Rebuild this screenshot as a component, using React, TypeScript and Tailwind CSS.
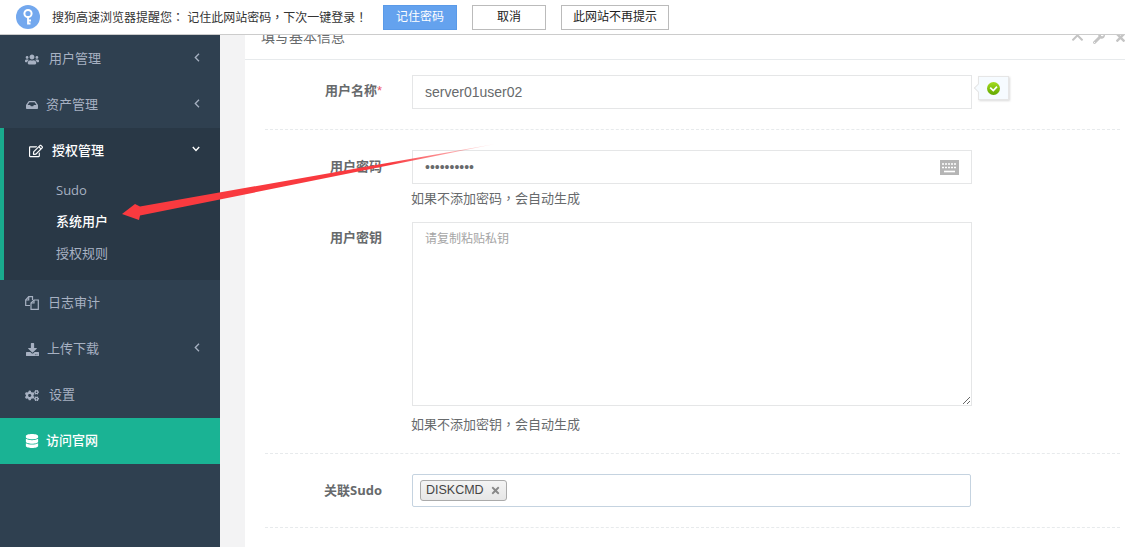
import React from "react";
import { FaUsers, FaInbox, FaRegEdit, FaDownload, FaCogs, FaDatabase, FaChevronUp, FaWrench, FaTimes } from "react-icons/fa";

const CJK = "font-['Open_Sans','Noto_Sans_CJK_SC',sans-serif]";

const P = ({ children }: { children: React.ReactNode }) => (
  <span className="font-['Noto_Sans_CJK_TC',sans-serif]">{children}</span>
);

const ChevLeft = () => (
  <svg width="6" height="9" viewBox="0 0 6 9" className="-translate-y-[2px]">
    <path d="M5 .8 1.3 4.5 5 8.2" fill="none" stroke="currentColor" strokeWidth="1.3" />
  </svg>
);

const ChevDown = () => (
  <svg width="8" height="6" viewBox="0 0 8 6" className="-translate-y-[2px]">
    <path d="M.8 1 4 4.4 7.2 1" fill="none" stroke="currentColor" strokeWidth="1.4" />
  </svg>
);

const FilesIcon = () => (
  <svg width="14" height="14" viewBox="0 0 14 14" fill="none" stroke="currentColor" strokeWidth="1.2">
    <path d="M5 9.5H.7V4L3.7.7H7.5V4" />
    <path d="M3.7.7V4H.7" />
    <path d="M6 13.3V7L9 4h4.3v9.3Z" />
    <path d="M9 4v3H6" />
  </svg>
);

function NavItem({ icon, label, arrow, gap = "gap-[10px]" }: { icon: React.ReactNode; label: string; arrow?: boolean; gap?: string }) {
  return (
    <div className={`h-[46px] pl-[25px] pr-[20px] flex items-center text-[13px] text-[#a7b1c2] ${gap}`}>
      <span className="w-[14px] flex justify-center">{icon}</span>
      <span className="flex-1">{label}</span>
      {arrow && <ChevLeft />}
    </div>
  );
}

function Sidebar() {
  return (
    <aside className="w-[220px] shrink-0 bg-[#2f4050] pt-px flex flex-col font-normal">
      <NavItem icon={<FaUsers size={15} />} label="用户管理" arrow />
      <NavItem icon={<FaInbox size={12} />} label="资产管理" arrow gap="gap-[7px]" />
      <div className="h-[152px] bg-[#293846] border-l-4 border-[#19aa8d]">
        <div className="h-[46px] pl-[25px] pr-[20px] flex items-center gap-[9px] text-[13px] text-white font-medium">
          <FaRegEdit size={14} className="shrink-0" />
          <span className="flex-1">授权管理</span>
          <ChevDown />
        </div>
        <div className="pl-[52px] pt-[1px] text-[13px] text-[#a7b1c2]">
          <div className="h-[31px] flex items-center">Sudo</div>
          <div className="h-[32px] flex items-center text-white font-medium">系统用户</div>
          <div className="h-[32px] flex items-center">授权规则</div>
        </div>
      </div>
      <NavItem icon={<FilesIcon />} label="日志审计" gap="gap-[9px]" />
      <NavItem icon={<FaDownload size={13} />} label="上传下载" arrow gap="gap-[8px]" />
      <NavItem icon={<FaCogs size={15} />} label="设置" />
      <div className="h-[46px] pl-[25px] flex items-center gap-[7px] bg-[#1ab394] text-white text-[13px] font-medium">
        <FaDatabase size={14} />
        <span>访问官网</span>
      </div>
    </aside>
  );
}

function TopBar() {
  return (
    <div className={`h-[35px] shrink-0 bg-white border-b border-[#cccccc] flex items-center text-[12px] text-[#333] ${CJK}`}>
      <svg className="ml-[16px] shrink-0" width="24" height="24" viewBox="0 0 24 24">
        <circle cx="12" cy="12" r="12" fill="#73a8ee" />
        <circle cx="12" cy="8.5" r="3.6" fill="none" stroke="#fff" strokeWidth="2" />
        <path d="M12 12v7.5M12 15.5h3M12 18.5h2.5" stroke="#fff" strokeWidth="1.8" fill="none" />
      </svg>
      <span className="ml-[12px] w-[331px] whitespace-nowrap">
        搜狗高速浏览器提醒您<P>：</P> 记住此网站密码<P>，</P>下次一键登录<P>！</P>
      </span>
      <div className="w-[74px] h-[25px] bg-[#64a2ee] border border-[#5a9ae8] text-white flex items-center justify-center">记住密码</div>
      <div className="ml-[15px] w-[74px] h-[25px] border border-[#bbb] flex items-center justify-center text-[#222]">取消</div>
      <div className="ml-[15px] w-[108px] h-[25px] border border-[#bbb] flex items-center justify-center text-[#222]">此网站不再提示</div>
    </div>
  );
}

function Label({ children, className = "" }: { children: React.ReactNode; className?: string }) {
  return <div className={`w-[137px] shrink-0 text-right text-[13px] font-bold text-[#676a6c] ${className}`}>{children}</div>;
}

const Dash = ({ className = "" }: { className?: string }) => (
  <div className={`ml-[20px] w-[855px] border-t border-dashed border-[#e7eaec] ${className}`} />
);

function ValidTip() {
  return (
    <div className="relative ml-[6px] mt-[1px] w-[31px] h-[24px] bg-[#f6fbff] border border-[#e6e6e6] shadow-[1px_1px_2px_rgba(0,0,0,0.15)] flex items-center justify-center">
      <span className="absolute -left-[4px] top-[8px] w-[6px] h-[6px] rotate-45 bg-[#f6fbff] border-l border-b border-[#e6e6e6]" />
      <svg width="13" height="13" viewBox="0 0 13 13">
        <defs>
          <linearGradient id="ok" x1="0" y1="0" x2="0" y2="1">
            <stop offset="0" stopColor="#a4dc1e" />
            <stop offset="1" stopColor="#62a800" />
          </linearGradient>
        </defs>
        <circle cx="6.5" cy="6.5" r="6.5" fill="url(#ok)" />
        <path d="M3.2 5.6 6.3 8.6 10 4.6" stroke="#fff" strokeWidth="1.7" fill="none" />
      </svg>
    </div>
  );
}

function Keyboard() {
  return (
    <svg width="19" height="15" viewBox="0 0 19 15">
      <rect width="19" height="15" fill="#b5b5b5" />
      <path d="M2 4h15M2 7.5h15" stroke="#fff" strokeWidth="1.6" strokeDasharray="2 1" fill="none" />
      <path d="M4 11.5h11" stroke="#fff" strokeWidth="1.6" fill="none" />
    </svg>
  );
}

function Form() {
  return (
    <main className="flex-1 min-w-0 bg-[#f3f3f4] pl-[25px] overflow-hidden">
      <div className={`h-full bg-white ${CJK}`}>
        <div className="h-[25px] border-b border-[#e7eaec] flex items-start text-[14px] text-[#676a6c]">
          <div className="ml-[16px] h-[11px] overflow-hidden flex items-end flex-1">
            <span className="block leading-[18px] whitespace-nowrap">填写基本信息</span>
          </div>
          <div className="flex text-[#c4c4c4] h-[9px] items-end overflow-hidden -mr-[2px]">
            <FaChevronUp size={13} />
            <FaWrench size={12} className="ml-[9px]" />
            <FaTimes size={13} className="ml-[9px]" />
          </div>
        </div>

        <div className="pt-[15px] flex items-start">
          <Label className="pt-[6px]">
            用户名称<span className="text-[#ed5565] font-normal font-['Liberation_Sans',sans-serif]">*</span>
          </Label>
          <div className="ml-[30px] w-[560px] h-[34px] border border-[#e5e6e7] px-[12px] flex items-center text-[14px] text-[#676a6c] font-['Liberation_Sans',sans-serif]">server01user02</div>
          <ValidTip />
        </div>
        <Dash className="mt-[20px]" />

        <div className="mt-[20px] flex items-start">
          <Label className="pt-[7px]">用户密码</Label>
          <div className="ml-[30px] w-[560px] h-[34px] border border-[#e5e6e7] pl-[12px] pr-[12px] flex items-center justify-between text-[14px] text-[#676a6c] font-['Liberation_Sans',sans-serif]">
            <span>••••••••••</span>
            <Keyboard />
          </div>
        </div>
        <div className="ml-[166px] mt-[4px] h-[19px] text-[13px] leading-[19px] text-[#676a6c]">如果不添加密码<P>，</P>会自动生成</div>

        <div className="mt-[15px] flex items-start">
          <Label className="pt-[6px]">用户密钥</Label>
          <textarea
            readOnly
            placeholder="请复制粘贴私钥"
            className="ml-[30px] w-[560px] h-[184px] block border border-[#e5e6e7] px-[12px] py-[7px] text-[12px] leading-[17px] placeholder:text-[#a5a5a5] outline-none"
          />
        </div>
        <div className="ml-[166px] mt-[8px] h-[19px] text-[13px] leading-[19px] text-[#676a6c]">如果不添加密钥<P>，</P>会自动生成</div>
        <Dash className="mt-[20px]" />

        <div className="mt-[20px] flex items-center">
          <Label>关联Sudo</Label>
          <div className="ml-[30px] w-[559px] h-[33px] border border-[#c5d3e0] rounded-[2px] flex items-center pl-[7px]">
            <div className="h-[21px] pl-[5px] pr-[5px] border border-[#aaa] rounded-[3px] bg-linear-to-b from-[#f4f4f4] to-[#e6e6e6] flex items-center gap-[6px] text-[12.5px] text-[#444] font-['Liberation_Sans',sans-serif]">
              DISKCMD
              <FaTimes size={11} className="text-[#888]" />
            </div>
          </div>
        </div>
        <Dash className="mt-[20px]" />
      </div>
    </main>
  );
}

export default function App() {
  return (
    <div className={`relative w-[1125px] h-[547px] overflow-hidden flex flex-col bg-white ${CJK}`}>
      <TopBar />
      <div className="flex-1 flex min-h-0">
        <Sidebar />
        <Form />
      </div>
      <svg className="absolute left-0 top-0 pointer-events-none" width="1125" height="547" viewBox="0 0 1125 547">
        <defs>
          <linearGradient id="tail" gradientUnits="userSpaceOnUse" x1="122" y1="214" x2="495" y2="144">
            <stop offset="0.72" stopColor="#f93a3f" />
            <stop offset="1" stopColor="#f93a3f" stopOpacity="0.1" />
          </linearGradient>
        </defs>
        <path d="M122 214 135 204 140 206.5 495 144 140 215.5 139 220Z" fill="url(#tail)" />
      </svg>
    </div>
  );
}
